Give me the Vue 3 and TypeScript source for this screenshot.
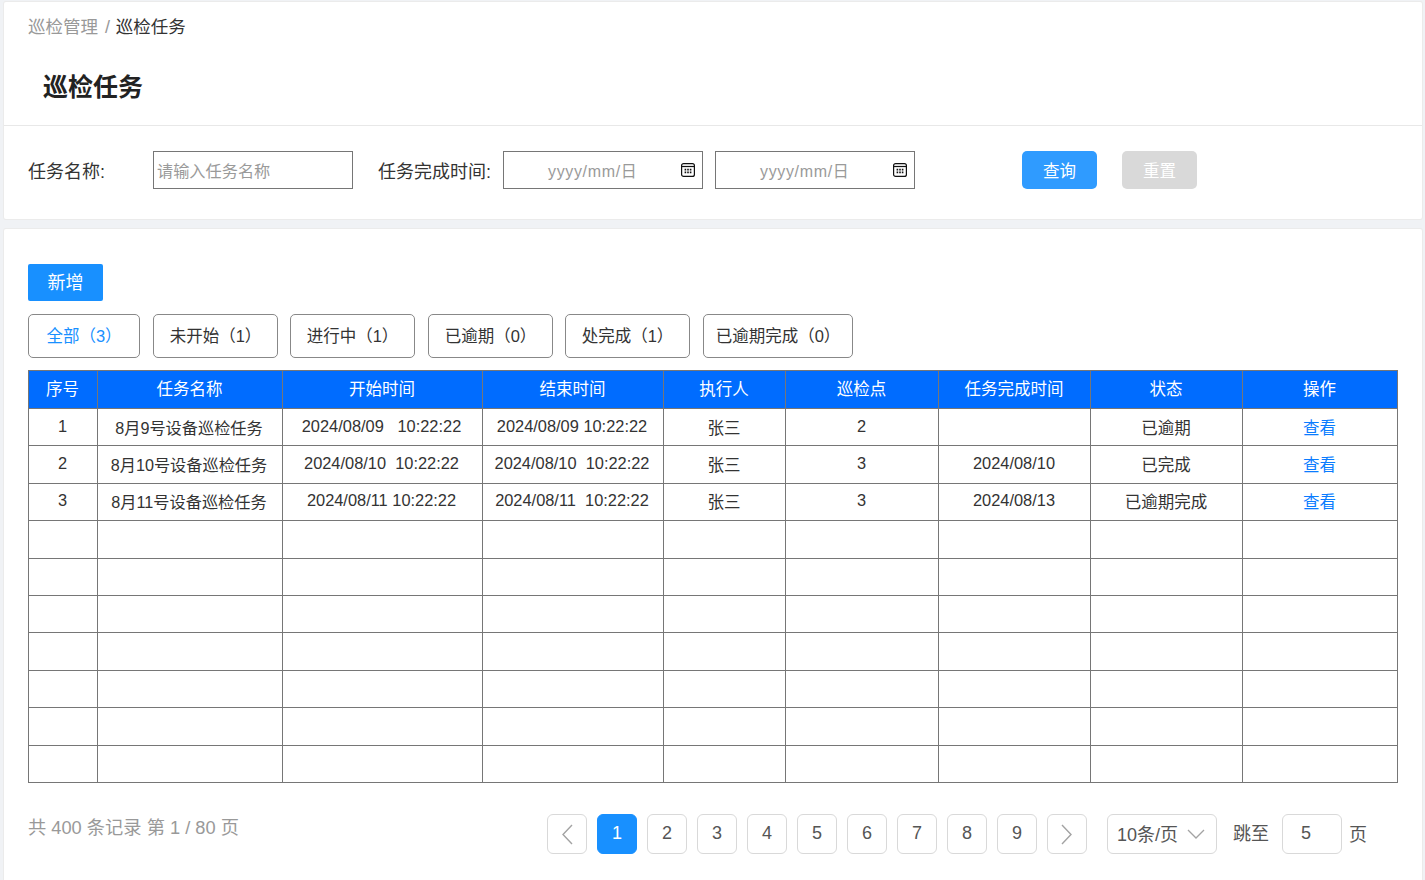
<template>
  <div class="page">
    <section class="card card--search">
      <div class="crumb"><span class="crumb__parent">巡检管理</span> <span class="crumb__sep">/</span> 巡检任务</div>
      <h1 class="title">巡检任务</h1>
      <div class="search">
        <label class="search__label search__label--name">任务名称:</label>
        <input class="search__input" type="text" placeholder="请输入任务名称" />
        <label class="search__label search__label--time">任务完成时间:</label>
        <div v-for="n in 2" :key="n" class="date">
          <span class="date__text">yyyy/mm/日</span>
          <svg class="date__icon" viewBox="0 0 14 14" fill="none" stroke="#111" stroke-width="1.2">
            <rect x="0.6" y="0.6" width="12.8" height="12.8" rx="2" />
            <path d="M0.6 3.5h12.8" />
            <path d="M3.6 6.6h1.6M6.2 6.6h1.6M8.8 6.6h1.6M3.6 9.4h1.6M6.2 9.4h1.6M8.8 9.4h1.6" stroke-width="1.6" />
          </svg>
        </div>
        <button class="btn btn--query" type="button">查询</button>
        <button class="btn btn--reset" type="button">重置</button>
      </div>
    </section>

    <section class="card card--list">
      <button class="add" type="button">新增</button>
      <div class="tabs">
        <button
          v-for="(tab, i) in tabs"
          :key="tab.label"
          class="tab"
          :class="[`tab--${i}`, { 'is-active': i === 0 }]"
          type="button"
        >{{ tab.label }}（{{ tab.count }}）</button>
      </div>

      <table class="grid">
        <colgroup>
          <col v-for="(h, i) in headers" :key="h" :class="`col-${i}`" />
        </colgroup>
        <thead>
          <tr>
            <th v-for="h in headers" :key="h">{{ h }}</th>
          </tr>
        </thead>
        <tbody>
          <tr v-for="row in rows" :key="row.id">
            <td class="num">{{ row.id }}</td>
            <td class="name">{{ row.name }}</td>
            <td class="num pre">{{ row.start }}</td>
            <td class="num pre">{{ row.end }}</td>
            <td>{{ row.user }}</td>
            <td class="num">{{ row.points }}</td>
            <td class="num">{{ row.done }}</td>
            <td>{{ row.status }}</td>
            <td><a class="link">查看</a></td>
          </tr>
          <tr v-for="n in 7" :key="`empty-${n}`">
            <td v-for="h in headers" :key="h"></td>
          </tr>
        </tbody>
      </table>

      <div class="pager">
        <div class="pager__total">共 400 条记录 第 1 / 80 页</div>
        <div class="pager__right">
          <button class="page-btn" type="button">
            <svg class="arrow" viewBox="0 0 12 24" fill="none" stroke="#a3a3a3" stroke-width="1.4">
              <path d="M11 3 2 12.5 11 22" />
            </svg>
          </button>
          <button
            v-for="p in 9"
            :key="p"
            class="page-btn page-btn--num"
            :class="{ 'is-current': p === 1 }"
            type="button"
          >{{ p }}</button>
          <button class="page-btn" type="button">
            <svg class="arrow" viewBox="0 0 12 24" fill="none" stroke="#a3a3a3" stroke-width="1.4">
              <path d="M1 3l9 9.5L1 22" />
            </svg>
          </button>
          <div class="size">
            <span class="size__text">10条/页</span>
            <svg class="size__arrow" viewBox="0 0 18 10" fill="none" stroke="#a3a3a3" stroke-width="1.3">
              <path d="M1 1l8 8 8-8" />
            </svg>
          </div>
          <span class="jump">跳至</span>
          <div class="jump__input">5</div>
          <span class="jump__unit">页</span>
        </div>
      </div>
    </section>
  </div>
</template>

<script setup lang="ts">
interface Tab {
  label: string
  count: number
}

interface Row {
  id: number
  name: string
  start: string
  end: string
  user: string
  points: number
  done: string
  status: string
}

const tabs: Tab[] = [
  { label: '全部', count: 3 },
  { label: '未开始', count: 1 },
  { label: '进行中', count: 1 },
  { label: '已逾期', count: 0 },
  { label: '处完成', count: 1 },
  { label: '已逾期完成', count: 0 }
]

const headers = ['序号', '任务名称', '开始时间', '结束时间', '执行人', '巡检点', '任务完成时间', '状态', '操作']

const rows: Row[] = [
  { id: 1, name: '8月9号设备巡检任务', start: '2024/08/09   10:22:22', end: '2024/08/09 10:22:22', user: '张三', points: 2, done: '', status: '已逾期' },
  { id: 2, name: '8月10号设备巡检任务', start: '2024/08/10  10:22:22', end: '2024/08/10  10:22:22', user: '张三', points: 3, done: '2024/08/10', status: '已完成' },
  { id: 3, name: '8月11号设备巡检任务', start: '2024/08/11 10:22:22', end: '2024/08/11  10:22:22', user: '张三', points: 3, done: '2024/08/13', status: '已逾期完成' }
]
</script>

<style>
html,
body {
  margin: 0;
  background: #f0f2f5;
}
</style>

<style scoped>
.page {
  height: 880px;
  overflow: hidden;
  padding: 2px 3px 0 4px;
  box-sizing: border-box;
  background: #f0f2f5;
  font-family: "Liberation Sans", "Noto Sans CJK SC", sans-serif;
  color: #333;
}

.card {
  background: #fff;
  border-radius: 2px;
  box-shadow: 0 0 0 1px #ebebeb;
}

.card--search {
  height: 217px;
  margin-bottom: 10px;
}

.crumb {
  padding: 13px 24px 0;
  font-size: 17.5px;
  line-height: 24px;
  color: #333;
}

.crumb__parent,
.crumb__sep {
  color: #999;
}

.crumb__sep {
  padding: 0 1px 0 2px;
  font-size: 18px;
}

.title {
  margin: 0;
  padding: 25px 39px 0;
  height: 87px;
  box-sizing: border-box;
  border-bottom: 1px solid #e8e8e8;
  font-size: 25px;
  line-height: 46px;
  font-weight: 700;
  color: #222;
}

.search {
  display: flex;
  align-items: center;
  padding: 25px 0 0 24px;
}

.search__label {
  font-size: 18px;
  color: #333;
}

.search__label--name {
  width: 125px;
}

.search__label--time {
  width: 125px;
  margin-left: 25px;
}

.search__input {
  width: 200px;
  height: 38px;
  box-sizing: border-box;
  padding: 3px 3px 0;
  border: 1px solid #767676;
  outline: none;
  font-family: inherit;
  font-size: 16.2px;
  color: #333;
}

.search__input::placeholder {
  color: #9a9a9a;
}

.date {
  display: flex;
  align-items: center;
  width: 200px;
  height: 38px;
  margin-right: 12px;
  padding: 0 7px 0 44px;
  box-sizing: border-box;
  border: 1px solid #767676;
  font-size: 16px;
  color: #9a9a9a;
}

.date__text {
  flex: 1;
  letter-spacing: 0.65px;
}

.date__icon {
  width: 14px;
  height: 14px;
}

.btn {
  width: 75px;
  height: 38px;
  padding: 0;
  border: 0;
  border-radius: 5px;
  font-family: inherit;
  font-size: 16.5px;
  color: #fff;
}

.btn--query {
  margin-left: 95px;
  background: #2f9bff;
}

.btn--reset {
  margin-left: 25px;
  background: #d9d9d9;
}

.card--list {
  height: 660px;
  padding: 35px 24px 0;
  box-sizing: border-box;
}

.add {
  display: block;
  width: 75px;
  height: 37px;
  padding: 0 0 3px;
  border: 0;
  border-radius: 2px;
  background: #1890ff;
  font-family: inherit;
  font-size: 18px;
  color: #fff;
}

.tabs {
  display: flex;
  margin-top: 13px;
}

.tab {
  height: 44px;
  padding: 0 0 2px;
  border: 1px solid #888;
  border-radius: 5px;
  background: #fff;
  font-family: inherit;
  font-size: 16.5px;
  color: #333;
}

.tab--0 { width: 112px; margin-right: 13px; }
.tab--1 { width: 125px; margin-right: 12px; }
.tab--2 { width: 125px; margin-right: 13px; }
.tab--3 { width: 125px; margin-right: 12px; }
.tab--4 { width: 125px; margin-right: 13px; }
.tab--5 { width: 150px; }

.tab.is-active {
  color: #1890ff;
}

.grid {
  width: 1369px;
  margin-top: 11.8px;
  border-collapse: collapse;
  table-layout: fixed;
  font-size: 16.5px;
}

.col-0 { width: 69px; }
.col-1 { width: 185px; }
.col-2 { width: 200px; }
.col-3 { width: 181px; }
.col-4 { width: 122px; }
.col-5 { width: 153px; }
.col-6 { width: 152px; }
.col-7 { width: 152px; }
.col-8 { width: 155px; }

.grid th,
.grid td {
  box-sizing: border-box;
  padding: 0 1px 0 0;
  border: 1px solid #767676;
  text-align: center;
}

.grid th {
  height: 38px;
  padding-bottom: 3px;
  background: #006cff;
  font-weight: 400;
  color: #fff;
}

.grid td {
  height: 37.45px;
  padding-bottom: 1px;
  color: #333;
}

.grid td.num {
  padding-bottom: 2px;
  font-size: 16.4px;
}

.grid td.name {
  padding-right: 2px;
  font-size: 16.2px;
}

.grid td.pre {
  padding-right: 2px;
  white-space: pre;
}

.link {
  color: #0a7cff;
}

.pager {
  display: flex;
  justify-content: space-between;
  margin-top: 31px;
}

.pager__total {
  font-size: 18.25px;
  line-height: 28px;
  color: #999;
}

.pager__right {
  display: flex;
  align-items: center;
  gap: 10px;
  padding-right: 31px;
  font-size: 18px;
  color: #555;
}

.page-btn {
  display: flex;
  align-items: center;
  justify-content: center;
  width: 40px;
  height: 40px;
  padding: 0;
  border: 1px solid #d9d9d9;
  border-radius: 6px;
  background: #fff;
  font-family: inherit;
  font-size: 18px;
  color: #555;
}

.page-btn--num {
  padding-bottom: 2px;
}

.page-btn.is-current {
  border-color: #1890ff;
  background: #1890ff;
  color: #fff;
}

.arrow {
  width: 12px;
  height: 24px;
}

.size {
  display: flex;
  align-items: center;
  justify-content: space-between;
  width: 110px;
  height: 40px;
  margin-left: 10px;
  padding: 0 11px 0 9px;
  box-sizing: border-box;
  border: 1px solid #d9d9d9;
  border-radius: 6px;
}

.size__text {
  margin-top: -2px;
}

.size__arrow {
  width: 18px;
  height: 10px;
}

.jump {
  margin: -4px 3px 0 6px;
}

.jump__input {
  width: 60px;
  height: 40px;
  padding-left: 18px;
  box-sizing: border-box;
  border: 1px solid #d9d9d9;
  border-radius: 6px;
  line-height: 36px;
}

.jump__unit {
  margin: -2px 0 0 -3px;
}
</style>
